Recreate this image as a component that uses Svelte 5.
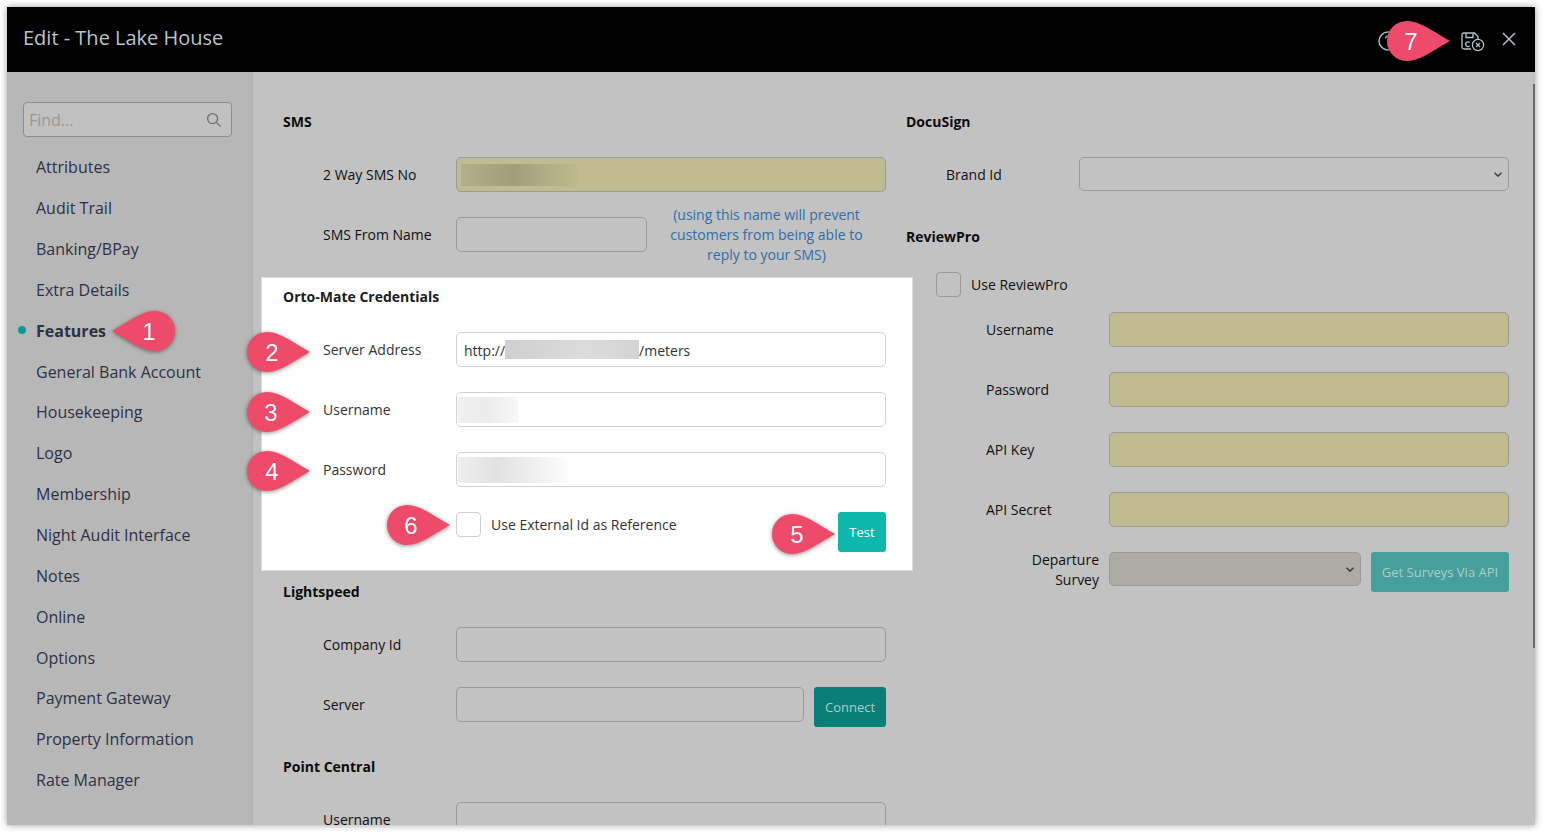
<script>
  const nav = ['Attributes','Audit Trail','Banking/BPay','Extra Details','Features','General Bank Account','Housekeeping','Logo','Membership','Night Audit Interface','Notes','Online','Options','Payment Gateway','Property Information','Rate Manager'];
  const pins = [
    { n: 1, x: 112, y: 311, flip: true, tx: 37 },
    { n: 2, x: 247, y: 332, tx: 25 },
    { n: 3, x: 247, y: 392, tx: 24 },
    { n: 4, x: 247, y: 451, tx: 25 },
    { n: 5, x: 772, y: 514, tx: 25 },
    { n: 6, x: 387, y: 505, tx: 24 },
    { n: 7, x: 1387, y: 21, tx: 24 }
  ];
</script>

<div class="window">
  <header class="top">
    <h1>Edit - The Lake House</h1>
    <div class="tools">
      <svg class="ic-help" viewBox="0 0 20 20" width="20" height="20" fill="none" stroke="#b4c0c8" stroke-width="1.4"><circle cx="10" cy="10" r="9"/><path d="M7.5 7.5a2.5 2.5 0 1 1 3.6 2.3c-.7.4-1.1.9-1.1 1.7"/><path d="M10 14v1"/></svg>
      <svg class="ic-other" viewBox="0 0 22 22" width="22" height="22" fill="none" stroke="#b4c0c8" stroke-width="1.4"><circle cx="11" cy="11" r="9"/></svg>
      <svg class="ic-save" viewBox="0 0 24 20" width="24" height="20" fill="none" stroke="#b4c0c8" stroke-width="1.3">
        <path d="M10 17H3a2 2 0 0 1-2-2V3a2 2 0 0 1 2-2h10.5L17 4.5V7"/>
        <path d="M5 1v4.5h7V1"/>
        <path d="M8.5 10.5a2.3 2.3 0 1 0 0 3.5"/>
        <circle cx="17" cy="13" r="5.6"/>
        <path d="M15 11l4 4M19 11l-4 4"/>
      </svg>
      <svg class="ic-close" viewBox="0 0 14 14" width="14" height="14" fill="none" stroke="#b4c0c8" stroke-width="1.5"><path d="M1 1l12 12M13 1L1 13"/></svg>
    </div>
  </header>

  <div class="body">
    <aside class="side">
      <div class="find">
        <input type="text" placeholder="Find..." />
        <svg viewBox="0 0 16 16" width="16" height="16" fill="none" stroke="#6f6f6f" stroke-width="1.3"><circle cx="6.6" cy="6.6" r="5"/><path d="M10.4 10.4l4.2 4.2"/></svg>
      </div>
      <nav>
        {#each nav as item}
          <div class="nav-item" class:active={item === 'Features'}>{item}</div>
        {/each}
      </nav>
    </aside>

    <main class="main">
      <div class="col">
        <h2>SMS</h2>
        <div class="row"><label for="a1">2 Way SMS No</label><div class="field req" id="a1"><span class="blur b-sms"></span></div></div>
        <div class="row">
          <label for="a2">SMS From Name</label>
          <div class="with-note">
            <input id="a2" class="input short" type="text" />
            <p class="note">(using this name will prevent customers from being able to reply to your SMS)</p>
          </div>
        </div>

        <section class="panel">
          <h2>Orto-Mate Credentials</h2>
          <div class="row"><label for="b1">Server Address</label><div class="field light val" id="b1">http://<span class="blur b-url"></span>/meters</div></div>
          <div class="row"><label for="b2">Username</label><div class="field light" id="b2"><span class="blur b-user"></span></div></div>
          <div class="row"><label for="b3">Password</label><div class="field light" id="b3"><span class="blur b-pass"></span></div></div>
          <div class="check-row">
            <span class="box light"></span>
            <span class="check-label">Use External Id as Reference</span>
            <button class="btn test">Test</button>
          </div>
        </section>

        <h2 class="h-light">Lightspeed</h2>
        <div class="row"><label for="c1">Company Id</label><input id="c1" class="input" type="text" /></div>
        <div class="row top-align">
          <label for="c2">Server</label>
          <div class="with-btn"><input id="c2" class="input" type="text" /><button class="btn connect">Connect</button></div>
        </div>

        <h2 class="h-point">Point Central</h2>
        <div class="row"><label for="d1">Username</label><input id="d1" class="input" type="text" /></div>
      </div>

      <div class="col">
        <h2>DocuSign</h2>
        <div class="row top-align"><label for="e1">Brand Id</label><select id="e1" class="input sel"></select></div>
        <h2 class="h-review">ReviewPro</h2>
        <div class="use-review"><span class="box"></span><span>Use ReviewPro</span></div>
        <div class="row deep"><label for="f1">Username</label><input id="f1" class="input yellow" type="text" /></div>
        <div class="row deep"><label for="f2">Password</label><input id="f2" class="input yellow" type="text" /></div>
        <div class="row deep"><label for="f3">API Key</label><input id="f3" class="input yellow" type="text" /></div>
        <div class="row deep"><label for="f4">API Secret</label><input id="f4" class="input yellow" type="text" /></div>
        <div class="row deep top-align">
          <label for="f5" class="two-line">Departure Survey</label>
          <div class="with-btn survey"><select id="f5" class="input sel off"></select><button class="btn surveys">Get Surveys Via API</button></div>
        </div>
      </div>
    </main>
  </div>
  <span class="scroll"></span>
</div>

{#each pins as p}
  <div class="pin" style="left:{p.x}px;top:{p.y}px">
    <svg viewBox="0 0 63 40" width="63" height="40" class:flip={p.flip}>
      <path d="M20 0C34 0 48 12 63 20 48 28 34 40 20 40A20 20 0 0 1 20 0Z" fill="#ee4b6b"/>
    </svg>
    <span style="left:{p.tx}px">{p.n}</span>
  </div>
{/each}

<style>
  :global(body) { margin: 0; background: #fff; overflow: hidden; font-family: "Open Sans", sans-serif; }
  * { box-sizing: border-box; }
  .window { position: absolute; left: 7px; top: 7px; width: 1528px; height: 818px; display: flex; flex-direction: column; overflow: hidden; box-shadow: 0 0 7px rgba(0,0,0,.4); background: #c2c2c2; }
  .top { flex: 0 0 65px; background: #000; display: flex; align-items: center; justify-content: space-between; padding: 0 19px 0 16px; }
  h1 { margin: 0 0 3px; font-size: 20px; font-weight: 400; color: #b8c4cc; line-height: 28px; }
  .tools { display: flex; align-items: center; margin-top: 2px; }
  .ic-other { margin-left: 22px; }
  .ic-save { margin-left: 19px; margin-top: 2px; }
  .ic-close { margin-left: 17px; margin-top: -4px; }
  .body { flex: 1; display: flex; min-height: 0; }
  .side { flex: 0 0 246px; background: #b7b7b7; border-right: 1px solid #b0b0b0; padding: 30px 0 0 16px; }
  .find { position: relative; width: 209px; height: 35px; }
  .find input { width: 100%; height: 100%; border: 1px solid #8d8d8d; border-radius: 4px; background: #c1c1c1; padding: 0 5px; font: 16px "Open Sans", sans-serif; outline: none; }
  .find input::placeholder { color: #979797; opacity: 1; }
  .find svg { position: absolute; right: 10px; top: 10px; }
  nav { margin-top: 10.4px; margin-left: -16px; }
  .nav-item { position: relative; height: 40.85px; line-height: 40.85px; padding-left: 29px; font-size: 16px; color: #2e3144; }
  .nav-item.active { font-weight: 700; }
  .nav-item.active::before { content: ""; position: absolute; left: 11px; top: 15px; width: 8px; height: 8px; border-radius: 50%; background: #0a9a9c; }
  .main { flex: 1; min-width: 0; display: grid; grid-template-columns: 603px 603px; gap: 20px; padding: 40px 26px 0 30px; align-content: start; overflow: hidden; }
  .col { min-width: 0; }
  h2 { margin: 0 0 25px; font-size: 14px; font-weight: 700; line-height: 20px; color: #0c0c0c; }
  .row { display: grid; grid-template-columns: 133px 1fr; align-items: center; margin: 0 0 25px 40px; min-height: 34px; }
  .row.top-align { align-items: start; }
  .row.deep { margin-left: 80px; grid-template-columns: 123px 1fr; }
  label { font-size: 14px; line-height: 35px; color: #111; }
  .input, .field { display: block; width: 100%; height: 35px; border: 1px solid #9a9a9a; border-radius: 5px; background: #c2c2c2; font: 14px "Open Sans", sans-serif; outline: none; }
  .sel { height: 34px; padding: 0 4px; color: #222; appearance: none; background-image: url("data:image/svg+xml,%3Csvg xmlns='http://www.w3.org/2000/svg' width='8' height='5' viewBox='0 0 8 5'%3E%3Cpath d='M.6.8 4 4.2 7.4.8' fill='none' stroke='%23333' stroke-width='1.3'/%3E%3C/svg%3E"); background-repeat: no-repeat; background-position: right 6px center; }
  .sel.off { background-color: #acaca4; }
  .yellow, .req { background: #c0bc8f; }
  .field { display: flex; align-items: center; padding: 0; position: relative; }
  .field.light { background: #fff; border-color: #d0d0d0; }
  .val { padding-left: 7px; padding-top: 2px; color: #333; font-size: 14px; }
  .blur { display: block; flex: none; }
  .b-sms { width: 116px; height: 22px; margin-left: 4px; background: linear-gradient(90deg, #b3af88 0, #a19d78 45%, #b0ac86 72%, #bdb98c 100%); }
  .b-url { width: 134px; height: 19px; margin-top: -2px; background: linear-gradient(90deg, #cfcfcf, #dcdcdc 60%, #d4d4d4); }
  .b-user { width: 61px; height: 26px; margin-left: 1px; background: linear-gradient(90deg, #efefef, #ececec 50%, #f9f9f9); }
  .b-pass { width: 114px; height: 26px; margin-left: 1px; background: linear-gradient(90deg, #eee, #e2e2e2 35%, #f5f5f5 80%, #fff); }
  .with-note { display: flex; align-items: center; height: 35px; }
  .short { width: 191px; flex: none; }
  .note { margin: 0 0 0 12.5px; width: 214px; font-size: 14px; line-height: 20px; color: #2f6eaa; text-align: center; }
  .panel { margin: 0 -27px 0 -22px; padding: 9px 26px 0 21px; height: 294px; background: #fff; border: 1px solid #dcdcdc; }
  .panel h2 { color: #1c1c1c; }
  .panel label { color: #333; }
  .check-row { display: flex; align-items: flex-start; margin-left: 173px; }
  .box { flex: none; display: block; width: 25px; height: 25px; border: 1px solid #9a9a9a; border-radius: 4px; }
  .box.light { border-color: #d0d0d0; background: #fff; }
  .check-label { margin-left: 10px; font-size: 14px; line-height: 25px; color: #333; }
  .btn { border: 0; border-radius: 3px; height: 40px; font: 13px "Open Sans", sans-serif; padding: 0; }
  .test { margin-left: auto; width: 48px; background: #0cb8ac; color: #fff; }
  .connect { flex: none; width: 72px; background: #0a7f78; color: #a9cfcc; }
  .surveys { flex: none; width: 138px; background: #479f9c; color: #a9cfcc; }
  .h-light { margin-top: 11px; }
  .h-point { margin-top: 30px; }
  .h-review { margin-top: 35px; }
  .with-btn { display: flex; gap: 10px; align-items: flex-start; }
  .with-btn .input { flex: 1; min-width: 0; }
  .use-review { display: flex; align-items: center; gap: 10px; margin: 0 0 15px 30px; font-size: 14px; color: #111; }
  .two-line { display: block; line-height: 20px; text-align: right; padding-right: 10px; margin-top: -2px; }
  .scroll { position: absolute; right: 0; top: 77px; width: 2px; height: 564px; background: #6a6a6a; }
  .pin { position: absolute; width: 63px; height: 40px; filter: drop-shadow(0 1px 2px rgba(0,0,0,.45)); }
  .pin svg { display: block; }
  .pin svg.flip { transform: scaleX(-1); }
  .pin span { position: absolute; top: 1px; transform: translateX(-50%); font: 24px/40px "Liberation Sans", sans-serif; color: #fff; }
</style>
